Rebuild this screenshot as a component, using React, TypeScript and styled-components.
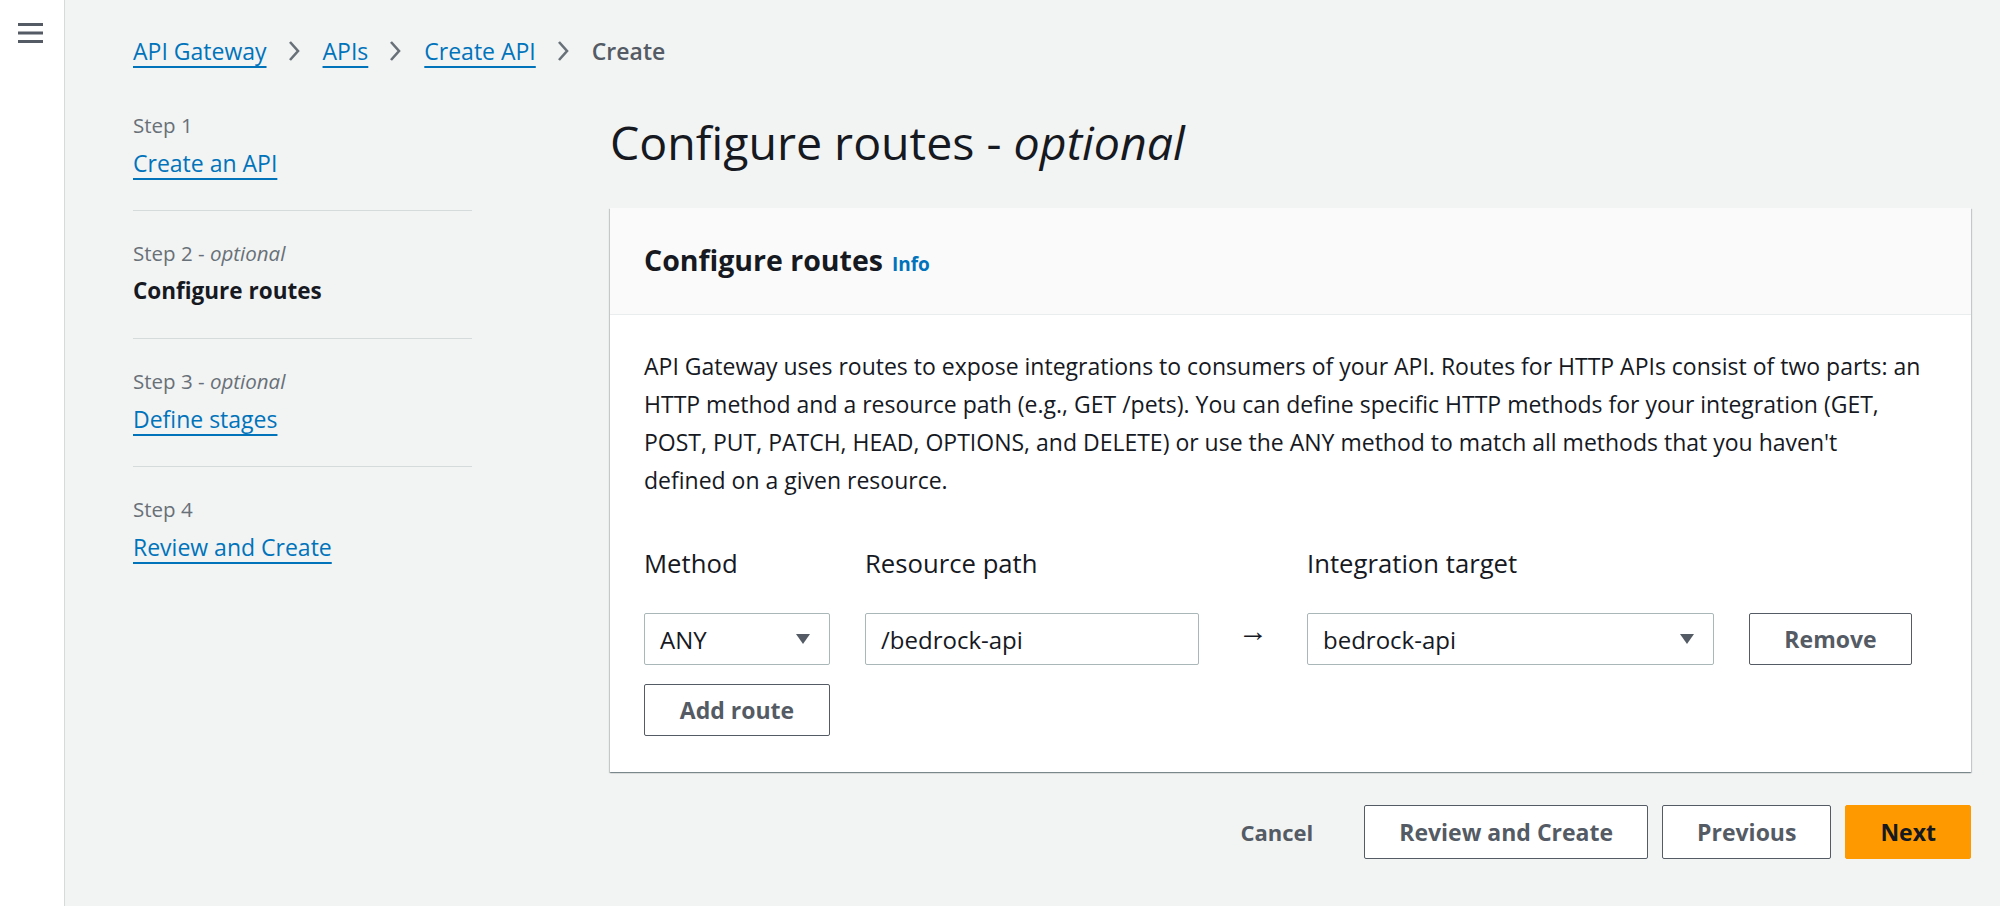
import React from 'react';
import styled, { createGlobalStyle } from 'styled-components';

const GlobalStyle = createGlobalStyle`
  html, body {
    margin: 0;
    padding: 0;
  }
  body {
    background: #f2f3f3;
    font-family: 'Open Sans', 'Noto Sans', sans-serif;
    color: #16191f;
  }
  * {
    box-sizing: border-box;
  }
`;

const steps = [
    { label: 'Step 1', optional: false, title: 'Create an API', current: false },
    { label: 'Step 2', optional: true, title: 'Configure routes', current: true },
    { label: 'Step 3', optional: true, title: 'Define stages', current: false },
    { label: 'Step 4', optional: false, title: 'Review and Create', current: false },
];

function Caret() {
    return (
        <svg width="16" height="12" viewBox="0 0 16 12">
            <path d="M1 1h14L8 11z" fill="#545b64" />
        </svg>
    );
}

function Chevron() {
    return (
        <svg width="12" height="22" viewBox="0 0 12 22">
            <path d="M2 2l8 9-8 9" fill="none" stroke="#687078" strokeWidth="2.6" />
        </svg>
    );
}

export default function App() {
    return (
        <Shell>
            <GlobalStyle />
            <SideRail>
                <MenuButton aria-label="Open navigation">
                    <svg width="25" height="20" viewBox="0 0 25 20">
                        <rect x="0" y="0" width="25" height="3" fill="#545b64" />
                        <rect x="0" y="8.5" width="25" height="3" fill="#545b64" />
                        <rect x="0" y="17" width="25" height="3" fill="#545b64" />
                    </svg>
                </MenuButton>
            </SideRail>

            <Main>
                <Breadcrumbs>
                    <CrumbLink href="#">API Gateway</CrumbLink>
                    <Separator><Chevron /></Separator>
                    <CrumbLink href="#">APIs</CrumbLink>
                    <Separator><Chevron /></Separator>
                    <CrumbLink href="#">Create API</CrumbLink>
                    <Separator><Chevron /></Separator>
                    <CrumbCurrent>Create</CrumbCurrent>
                </Breadcrumbs>

                <Layout>
                    <StepNav>
                        {steps.map((s, i) => (
                            <StepItem key={s.label} $first={i === 0} $last={i === steps.length - 1}>
                                <StepLabel>
                                    {s.label}
                                    {s.optional && <> - <i>optional</i></>}
                                </StepLabel>
                                {s.current ? (
                                    <StepCurrent>{s.title}</StepCurrent>
                                ) : (
                                    <StepLink href="#">{s.title}</StepLink>
                                )}
                            </StepItem>
                        ))}
                    </StepNav>

                    <Content>
                        <PageTitle>
                            Configure routes - <i>optional</i>
                        </PageTitle>

                        <Card>
                            <CardHeader>
                                <CardTitle>Configure routes</CardTitle>
                                <InfoLink href="#">Info</InfoLink>
                            </CardHeader>
                            <CardBody>
                                <Description>
                                    API Gateway uses routes to expose integrations to consumers of your API. Routes for
                                    HTTP APIs consist of two parts: an HTTP method and a resource path (e.g., GET /pets).
                                    You can define specific HTTP methods for your integration (GET, POST, PUT, PATCH,
                                    HEAD, OPTIONS, and DELETE) or use the ANY method to match all methods that you
                                    haven't defined on a given resource.
                                </Description>

                                <RouteGrid>
                                    <FieldLabel $col={1}>Method</FieldLabel>
                                    <FieldLabel $col={2}>Resource path</FieldLabel>
                                    <FieldLabel $col={4}>Integration target</FieldLabel>

                                    <Slot $col={1} $row={2}>
                                        <SelectBox>
                                            <span>ANY</span>
                                            <Caret />
                                        </SelectBox>
                                    </Slot>
                                    <Slot $col={2} $row={2}>
                                        <TextInput defaultValue="/bedrock-api" />
                                    </Slot>
                                    <Slot $col={3} $row={2}>
                                        <Arrow>→</Arrow>
                                    </Slot>
                                    <Slot $col={4} $row={2}>
                                        <SelectBox>
                                            <span>bedrock-api</span>
                                            <Caret />
                                        </SelectBox>
                                    </Slot>
                                    <Slot $col={5} $row={2}>
                                        <Button>Remove</Button>
                                    </Slot>
                                    <Slot $col={1} $row={3}>
                                        <Button>Add route</Button>
                                    </Slot>
                                </RouteGrid>
                            </CardBody>
                        </Card>

                        <Actions>
                            <LinkButton>Cancel</LinkButton>
                            <Button>Review and Create</Button>
                            <Button>Previous</Button>
                            <Button $primary>Next</Button>
                        </Actions>
                    </Content>
                </Layout>
            </Main>
        </Shell>
    );
}

const Shell = styled.div`
    display: flex;
    min-height: 100vh;
`;

const SideRail = styled.aside`
    width: 65px;
    flex-shrink: 0;
    background: #ffffff;
    border-right: 1px solid #d5dbdb;
    padding: 23px 0 0 18px;
`;

const MenuButton = styled.button`
    display: block;
    padding: 0;
    border: 0;
    background: none;
    cursor: pointer;
    line-height: 0;
`;

const Main = styled.main`
    flex: 1;
    min-width: 0;
    padding: 36px 29px 40px 68px;
`;

const Breadcrumbs = styled.nav`
    display: flex;
    align-items: center;
    height: 30px;
    font-size: 23px;
    line-height: 30px;
`;

const CrumbLink = styled.a`
    color: #0073bb;
    text-decoration: underline;
    text-decoration-thickness: 2px;
    text-underline-offset: 6px;
`;

const CrumbCurrent = styled.span`
    color: #545b64;
    font-weight: 600;
`;

const Separator = styled.span`
    display: flex;
    align-items: center;
    margin: 0 23px 0 21px;
`;

const Layout = styled.div`
    display: grid;
    grid-template-columns: 339px 1fr;
    column-gap: 138px;
    margin-top: 46px;
`;

const StepNav = styled.ol`
    list-style: none;
    margin: 0;
    padding: 0;
`;

const StepItem = styled.li<{ $first: boolean; $last: boolean }>`
    display: flex;
    flex-direction: column;
    gap: 10px;
    padding: ${(p) => (p.$first ? '0' : '29px')} 0 32px;
    border-bottom: ${(p) => (p.$last ? 'none' : '1px solid #d5dbdb')};
`;

const StepLabel = styled.div`
    font-size: 20.5px;
    line-height: 26px;
    color: #687078;
`;

const StepLink = styled.a`
    align-self: flex-start;
    font-size: 23px;
    line-height: 30px;
    color: #0073bb;
    text-decoration: underline;
    text-decoration-thickness: 2px;
    text-underline-offset: 6px;
`;

const StepCurrent = styled.div`
    font-size: 22.5px;
    line-height: 30px;
    font-weight: 700;
    color: #16191f;
`;

const Content = styled.div`
    min-width: 0;
`;

const PageTitle = styled.h1`
    margin: 2px 0 38px;
    font-size: 46.5px;
    line-height: 56px;
    font-weight: 400;
    color: #16191f;
`;

const Card = styled.section`
    background: #ffffff;
    box-shadow: 0 1px 1px 0 rgba(0, 28, 36, 0.3), 1px 1px 1px 0 rgba(0, 28, 36, 0.15),
        -1px 1px 1px 0 rgba(0, 28, 36, 0.15);
`;

const CardHeader = styled.header`
    display: flex;
    align-items: baseline;
    gap: 9px;
    padding: 35px 34px 37px;
    background: #fafafa;
    border-bottom: 1px solid #eaeded;
`;

const CardTitle = styled.h2`
    margin: 0;
    font-size: 28.5px;
    line-height: 34px;
    font-weight: 700;
`;

const InfoLink = styled.a`
    font-size: 19px;
    font-weight: 700;
    color: #0073bb;
    text-decoration: none;
`;

const CardBody = styled.div`
    padding: 32px 34px 36px;
`;

const Description = styled.p`
    max-width: 1277px;
    margin: 0;
    font-size: 23px;
    line-height: 38px;
`;

const RouteGrid = styled.div`
    display: grid;
    grid-template-columns: 186px 334px 38px 407px 163px;
    column-gap: 35px;
    align-items: center;
    margin-top: 49px;
`;

const FieldLabel = styled.div<{ $col: number }>`
    grid-column: ${(p) => p.$col};
    grid-row: 1;
    margin-bottom: 33px;
    font-size: 25.7px;
    line-height: 32px;
`;

const Slot = styled.div<{ $col: number; $row: number }>`
    grid-column: ${(p) => p.$col};
    grid-row: ${(p) => p.$row};
    display: flex;
    margin-top: ${(p) => (p.$row === 3 ? '19px' : '0')};

    & > * {
        flex: 1;
    }
`;

const controlBase = `
    height: 52px;
    border: 1px solid #aab7b8;
    border-radius: 2px;
    background: #ffffff;
    font-family: inherit;
    font-size: 24px;
    color: #16191f;
`;

const SelectBox = styled.div`
    ${controlBase}
    display: flex;
    align-items: center;
    justify-content: space-between;
    padding: 0 18px 0 15px;
`;

const TextInput = styled.input`
    ${controlBase}
    width: 100%;
    padding: 0 15px;
    outline: none;
`;

const Arrow = styled.div`
    text-align: center;
    font-size: 30px;
    line-height: 30px;
    margin-top: -18px;
`;

const Button = styled.button<{ $primary?: boolean }>`
    height: ${(p) => (p.$primary ? '54px' : '52px')};
    padding: 0 34px;
    border: 1px solid ${(p) => (p.$primary ? '#ff9900' : '#545b64')};
    border-radius: 2px;
    background: ${(p) => (p.$primary ? '#ff9900' : '#ffffff')};
    color: ${(p) => (p.$primary ? '#16191f' : '#545b64')};
    font-family: inherit;
    font-size: 23px;
    font-weight: 700;
    cursor: pointer;
    white-space: nowrap;
`;

const LinkButton = styled.button`
    height: 54px;
    padding: 0 37px 0 26px;
    border: 0;
    background: none;
    color: #545b64;
    font-family: inherit;
    font-size: 22px;
    font-weight: 700;
    cursor: pointer;
`;

const Actions = styled.div`
    display: flex;
    justify-content: flex-end;
    align-items: center;
    gap: 14px;
    margin-top: 33px;

    & > button {
        height: 54px;
    }
`;
